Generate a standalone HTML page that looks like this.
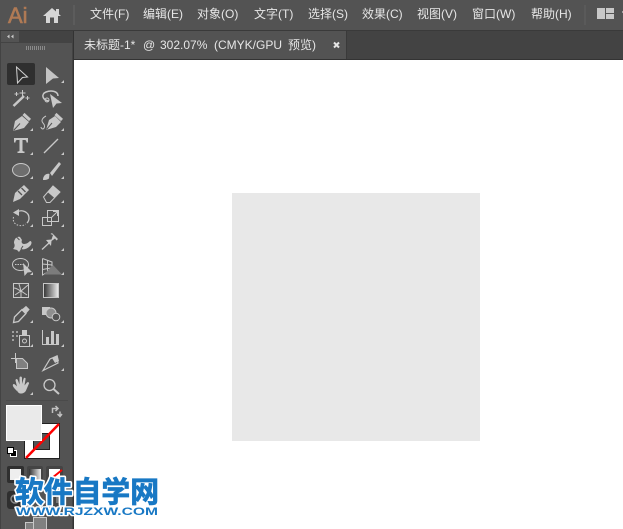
<!DOCTYPE html>
<html><head><meta charset="utf-8">
<style>
html,body{margin:0;padding:0;background:#fff}
#r{position:relative;width:623px;height:529px;overflow:hidden;background:#fff;font-family:"Liberation Sans","Noto Sans CJK SC",sans-serif}
.a{position:absolute}
.m{position:absolute;top:6px;font-size:12px;line-height:16px;color:#e6e6e6;white-space:nowrap}
.t{top:37px}
#ic{position:absolute;left:0;top:0}
</style></head><body>
<div id="r">
<div class="a" style="left:0;top:0;width:623px;height:30px;background:#535353"></div>
<div class="a" style="left:0;top:30px;width:623px;height:1px;background:#3a3a3a"></div>
<div class="a" style="left:74px;top:31px;width:549px;height:29px;background:#434343"></div>
<div class="a" style="left:74px;top:31px;width:272px;height:28px;background:#535353"></div>
<div class="a" style="left:346px;top:31px;width:1px;height:28px;background:#3a3a3a"></div>
<div class="a" style="left:74px;top:59px;width:549px;height:1px;background:#333"></div>
<div class="a" style="left:0;top:31px;width:74px;height:498px;background:#434343"></div>
<div class="a" style="left:1px;top:43px;width:71px;height:486px;background:#535353"></div>
<div class="a" style="left:1px;top:31px;width:18px;height:11px;background:#535353"></div>
<div class="a" style="left:73px;top:31px;width:1px;height:498px;background:#333"></div>
<div class="a" style="left:74px;top:60px;width:549px;height:469px;background:#fff"></div>
<div class="a" style="left:232px;top:193px;width:247.500px;height:247.500px;background:#e8e8e8"></div>

<div class="a" style="left:8px;top:2px;font:22px/28px 'Liberation Sans',sans-serif;color:#b07a55;-webkit-text-stroke:.6px #b07a55">Ai</div>
<div class="a" style="left:73px;top:5px;width:2px;height:20px;background:#5c5c5c"></div>
<div class="a" style="left:584px;top:5px;width:2px;height:20px;background:#5a5a5a"></div>

<div class="m" style="left:90px">文件(F)</div>
<div class="m" style="left:143px">编辑(E)</div>
<div class="m" style="left:197px">对象(O)</div>
<div class="m" style="left:254px">文字(T)</div>
<div class="m" style="left:308px">选择(S)</div>
<div class="m" style="left:362px">效果(C)</div>
<div class="m" style="left:417px">视图(V)</div>
<div class="m" style="left:472px">窗口(W)</div>
<div class="m" style="left:531px">帮助(H)</div>

<div class="m t" style="left:84px">未标题-1*</div>
<div class="m t" style="left:143px">@</div>
<div class="m t" style="left:160px">302.07%</div>
<div class="m t" style="left:214px">(CMYK/GPU</div>
<div class="m t" style="left:288px">预览)</div>

<svg id="ic" width="623" height="529" viewBox="0 0 623 529">
<defs><linearGradient id="g" x1="0" x2="1"><stop offset="0" stop-color="#333"/><stop offset="1" stop-color="#eee"/></linearGradient></defs>
<!-- home -->
<path d="M43 16 52 8l4 3.500V9h3v5.200L61 16h-3v7h-4v-5.500h-4V23h-4v-7z" fill="#d6d6d6"/>
<!-- workspace -->
<path d="M597 8h8v11h-8zM606 8h8v5h-8zM606 14h8v5h-8z" fill="#c8c8c8"/>
<path d="M622 11h1v2h-1z" fill="#a0a0a0"/>
<!-- close x -->
<path d="M334 42.500l5 5M339 42.500l-5 5" stroke="#e6e6e6" stroke-width="2"/>
<!-- collapse -->
<path d="M9.500 34.500 7 36.500l2.500 2zM13.500 34.500 11 36.500l2.500 2z" fill="#c8c8c8"/>
<!-- grip -->
<path d="M26.500 46v4M28.500 46v4M30.500 46v4M32.500 46v4M34.500 46v4M36.500 46v4M38.500 46v4M40.500 46v4M42.500 46v4M44.500 46v4" stroke="#8a8a8a" stroke-width="1"/>
<!-- selected tool -->
<rect x="7" y="63" width="28" height="22" rx="2" fill="#2f2f2f"/>
<path d="M16.500 67 27.500 77 22.500 77.500 17.500 83z" fill="none" stroke="#d2d2d2" stroke-width="1"/>
<path d="M46 67 59 78 53 78.500 46 84z" fill="#c4c4c4"/>
<!-- corner triangles -->
<g fill="#c8c8c8">
<path d="M64 80v3h-3zM33 128v3h-3zM64 128v3h-3zM33 152v3h-3zM64 152v3h-3zM33 176v3h-3zM64 176v3h-3zM33 200v3h-3zM64 200v3h-3zM33 224v3h-3zM64 224v3h-3zM33 248v3h-3zM64 248v3h-3zM33 272v3h-3zM64 272v3h-3zM33 320v3h-3zM64 320v3h-3zM33 344v3h-3zM64 344v3h-3zM64 368v3h-3zM33 392v3h-3z"/>
</g>
<!-- wand -->
<path d="M13.500 106 24 96" stroke="#c8c8c8" stroke-width="2.500"/>
<path d="M22.500 90v6M19.500 93h6M16.500 92v4M14.500 94h4M27.500 96v4M25.500 98h4" stroke="#c8c8c8" stroke-width="1"/>
<!-- lasso -->
<path d="M49 101c-7-1-8-7-3-9 5-2 12-1 12 4" fill="none" stroke="#c8c8c8" stroke-width="1.500"/>
<path d="M50 94 62 103 56.500 103.500 53 108z" fill="#c8c8c8"/>
<circle cx="47" cy="100" r="2" fill="none" stroke="#c8c8c8"/>
<!-- pen -->
<path d="M13 131 15 121 22 116 29 122 24 128z" fill="#c8c8c8"/>
<path d="M23.500 114 30 120" stroke="#c8c8c8" stroke-width="3"/>
<path d="M13.500 130.500 20 123.500" stroke="#535353"/>
<!-- curvature pen -->
<path d="M46 130 49 120 55 116 61 122 56 127z" fill="#c8c8c8"/>
<path d="M55.500 114 62 120" stroke="#c8c8c8" stroke-width="3"/>
<path d="M46.500 129.500 52 123" stroke="#535353"/>
<path d="M46 116c-4 2-5 5-3 7 2 2 2 5 0 6-1 0-2-1-2-2" fill="none" stroke="#c8c8c8"/>
<!-- type -->
<path d="M14 138h14v4.500h-1.500c0-1.500-.5-2.500-2-2.500H22.500v10.500c0 .8.700 1 2 1V153h-7v-1.500c1.300 0 2-.2 2-1V140h-2c-1.500 0-2 1-2 2.500H14z" fill="#c8c8c8"/>
<!-- line -->
<path d="M44 153 58 139" stroke="#c8c8c8" stroke-width="1.300"/>
<!-- ellipse -->
<ellipse cx="21" cy="170" rx="8.500" ry="6.500" fill="#6e6e6e" stroke="#c8c8c8"/>
<!-- brush -->
<path d="M43 180c0-5 4-7 6.500-6l-.500 4.500c-2 1.500-4 1.500-6 1.500zM50 173 59 162 61 164 52 176z" fill="#c8c8c8"/>
<!-- shaper/pencil -->
<path d="M13 202 15 193 24 185 29 190 20 199z" fill="#c8c8c8"/>
<path d="M18 191 22 195M21.500 188 25.500 192" stroke="#535353" stroke-width="1.300"/>
<!-- eraser -->
<path d="M43.500 197 53 186 60 192 50 202.500 46.500 202.500z" fill="#535353" stroke="#c8c8c8"/>
<path d="M47.500 192 53 185.500 60 192 54.500 198z" fill="#c8c8c8"/>
<!-- rotate -->
<path d="M17 212c5-3 12 0 12 6 0 2-1 4-2 5" fill="none" stroke="#c8c8c8" stroke-width="1.300"/>
<path d="M19 209v7l-6-3.500z" fill="#c8c8c8"/>
<path d="M13.500 217c-1 4 1 7 4 8 3 1 6 1 8-1" fill="none" stroke="#c8c8c8" stroke-dasharray="1.500 1.500"/>
<!-- scale -->
<rect x="42.500" y="217.500" width="9" height="8" fill="none" stroke="#c8c8c8"/>
<rect x="47.500" y="210.500" width="11" height="11" fill="none" stroke="#c8c8c8"/>
<path d="M51 218 57 212M53 211.500h4.500V216" stroke="#c8c8c8" fill="none"/>
<!-- warp -->
<path d="M13 249c2-2 2-4 1-6 0-4 3-7 6-6l2 3c-1 2 0 4 2 4 3 0 5-2 6-3 2 0 2 3 0 5-3 3-6 4-9 3l-2 3-2-2z" fill="#c8c8c8"/>
<path d="M15.500 236 19.500 240M21 249l2-3" stroke="#535353"/>
<!-- pin -->
<path d="M42 249.500 49 243" stroke="#c8c8c8" stroke-width="1.300"/>
<path d="M46 240 51.500 239.500 53 235 50.500 234 52 233 58 239 56.500 240.500 55 238.500 51.500 241 51 246z" fill="#c8c8c8"/>
<!-- shape builder -->
<ellipse cx="20.500" cy="264.500" rx="8" ry="6" fill="none" stroke="#c8c8c8"/>
<path d="M15 264.500h9" stroke="#c8c8c8" stroke-dasharray="1.500 1"/>
<path d="M23 263 32 272 27.500 272.500 24.500 276z" fill="#c8c8c8"/>
<!-- perspective -->
<path d="M42.500 258.500V275L51 270M42.500 258.500 52 262V270M42.500 264 52 265M42.500 269.500 51 268M47.500 260.500V272" fill="none" stroke="#c8c8c8"/>
<path d="M53 265 62 274.500H44z" fill="#7c7c7c"/>
<!-- mesh -->
<rect x="13.500" y="283.500" width="15" height="14" fill="#535353" stroke="#c8c8c8"/>
<path d="M14 288c3 0 4 2 7 3l7-6M21 291v6M15 295l6-4 6 4M19 284l2 7" fill="none" stroke="#c8c8c8"/>
<!-- gradient -->
<rect x="43.500" y="283.500" width="15" height="14" fill="url(#g)" stroke="#c8c8c8"/>
<!-- eyedropper -->
<path d="M13.500 322.500 14.500 317 22 309.500 26 313.500 18.500 321.500z" fill="#535353" stroke="#c8c8c8" stroke-width="1.300"/>
<path d="M22 310 26 306.500 29 309.500 25.500 313.500z" fill="#c8c8c8" stroke="#c8c8c8"/>
<!-- blend -->
<rect x="42" y="307" width="8" height="8" fill="#c8c8c8"/>
<circle cx="51" cy="313" r="5" fill="#8f8f8f" stroke="#c8c8c8"/>
<circle cx="56" cy="317" r="3.800" fill="#535353" stroke="#c8c8c8"/>
<!-- symbol sprayer -->
<rect x="19.500" y="335.500" width="10" height="11" fill="none" stroke="#c8c8c8"/>
<rect x="22" y="330" width="5" height="5" fill="#c8c8c8"/>
<circle cx="24.500" cy="341" r="2" fill="none" stroke="#c8c8c8"/>
<path d="M12 331h2v2h-2zM16 331h2v2h-2zM12 335h2v2h-2zM16 335h2v2h-2zM12 339h2v2h-2z" fill="#a0a0a0"/>
<!-- graph -->
<path d="M42.500 330V344.500H59" stroke="#c8c8c8" fill="none"/>
<path d="M46 337h3v7h-3zM51 331h3v13h-3zM56 334h3v10h-3z" fill="#c8c8c8"/>
<!-- artboard -->
<path d="M11 358.500H21M15.500 353V363" stroke="#c8c8c8"/>
<path d="M16.500 358.500h6l5 5V368.500H16.500z" fill="#808080" stroke="#c8c8c8"/>
<!-- slice -->
<path d="M43 370.500 50 359 57 356 58 363 46 369z" fill="none" stroke="#c8c8c8" stroke-width="1.200"/>
<path d="M52 358 57.500 355 59 361 55 363z" fill="#c8c8c8"/>
<!-- hand -->
<path d="M17 391c-2-2-5-5-4-6.500s3 1 4 2l-1.500-6c0-2 2-2 2.500 0l1.500 4V378c0-2 2.500-2 2.500 0v6l1.500-5c.5-2 2.500-1.500 2 .500l-1 6 2.500-3c1-1 2.500 0 2 1l-3 7c-1 2-3 3-5 3s-3-1-4-3z" fill="#c8c8c8"/>
<!-- zoom -->
<circle cx="49.500" cy="385" r="5.500" fill="none" stroke="#c8c8c8" stroke-width="1.300"/>
<path d="M53.500 389 59 394" stroke="#c8c8c8" stroke-width="2"/>
<!-- divider -->
<path d="M6 400.500H68" stroke="#4a4a4a"/>
<!-- colours -->
<rect x="24.500" y="423.500" width="35" height="35" fill="#fff" stroke="#222"/>
<rect x="33.500" y="433.500" width="16" height="16" fill="#535353" stroke="#222"/>
<path d="M26 458 59 424" stroke="#f00" stroke-width="2.500"/>
<rect x="6.500" y="405.500" width="35" height="35" fill="#eaeaea" stroke="#fff"/>
<path d="M52.500 413V408.500h5.500M55.500 406 58 408.500 55.500 411M60 416.500V411.500M57.500 414 60 416.500 62 414" fill="none" stroke="#c0c0c0" stroke-width="1.500"/>
<rect x="10.500" y="450.500" width="6" height="6" fill="#000" stroke="#fff"/>
<rect x="7.500" y="447.500" width="6" height="6" fill="#fff" stroke="#000"/>
<!-- modes -->
<rect x="7" y="466" width="17" height="17" rx="2" fill="#2f2f2f"/>
<rect x="10" y="469" width="11" height="11" fill="#eee"/>
<rect x="27" y="466" width="16" height="17" rx="2" fill="#444"/>
<rect x="29" y="469" width="12" height="11" fill="url(#g)"/>
<rect x="46" y="466" width="17" height="17" rx="2" fill="#444"/>
<rect x="49" y="469" width="11" height="11" fill="#fff"/>
<path d="M52 478 62 470" stroke="#f00" stroke-width="2"/>
<rect x="7" y="491" width="17" height="18" rx="3" fill="#2f2f2f"/>
<circle cx="15" cy="499" r="4" fill="none" stroke="#8a8a8a" stroke-width="1.500"/>
<rect x="46" y="491" width="16" height="18" rx="3" fill="#444"/>
<rect x="56" y="497" width="5" height="6" fill="#777"/>
<!-- bottom -->
<rect x="25.500" y="522.500" width="10" height="7" fill="#808080" stroke="#c8c8c8"/>
<rect x="33.500" y="517.500" width="13" height="12" fill="#808080" stroke="#c8c8c8"/>
<!-- watermark -->
<text x="15" y="502" font-family="Noto Sans CJK SC,sans-serif" font-weight="700" font-size="29" fill="#fff" stroke="#fff" stroke-width="4" stroke-linejoin="round" textLength="144" lengthAdjust="spacingAndGlyphs">软件自学网</text>
<text x="15" y="502" font-family="Noto Sans CJK SC,sans-serif" font-weight="700" font-size="29" fill="#1878c4" stroke="#1878c4" stroke-width=".8" textLength="144" lengthAdjust="spacingAndGlyphs">软件自学网</text>
<text x="16" y="515" font-family="Liberation Sans,sans-serif" font-weight="700" font-size="11" fill="#1878c4" stroke="#fff" stroke-width="2.500" stroke-linejoin="round" paint-order="stroke" textLength="142" lengthAdjust="spacingAndGlyphs">WWW.RJZXW.COM</text>
</svg>
</div>
</body></html>
